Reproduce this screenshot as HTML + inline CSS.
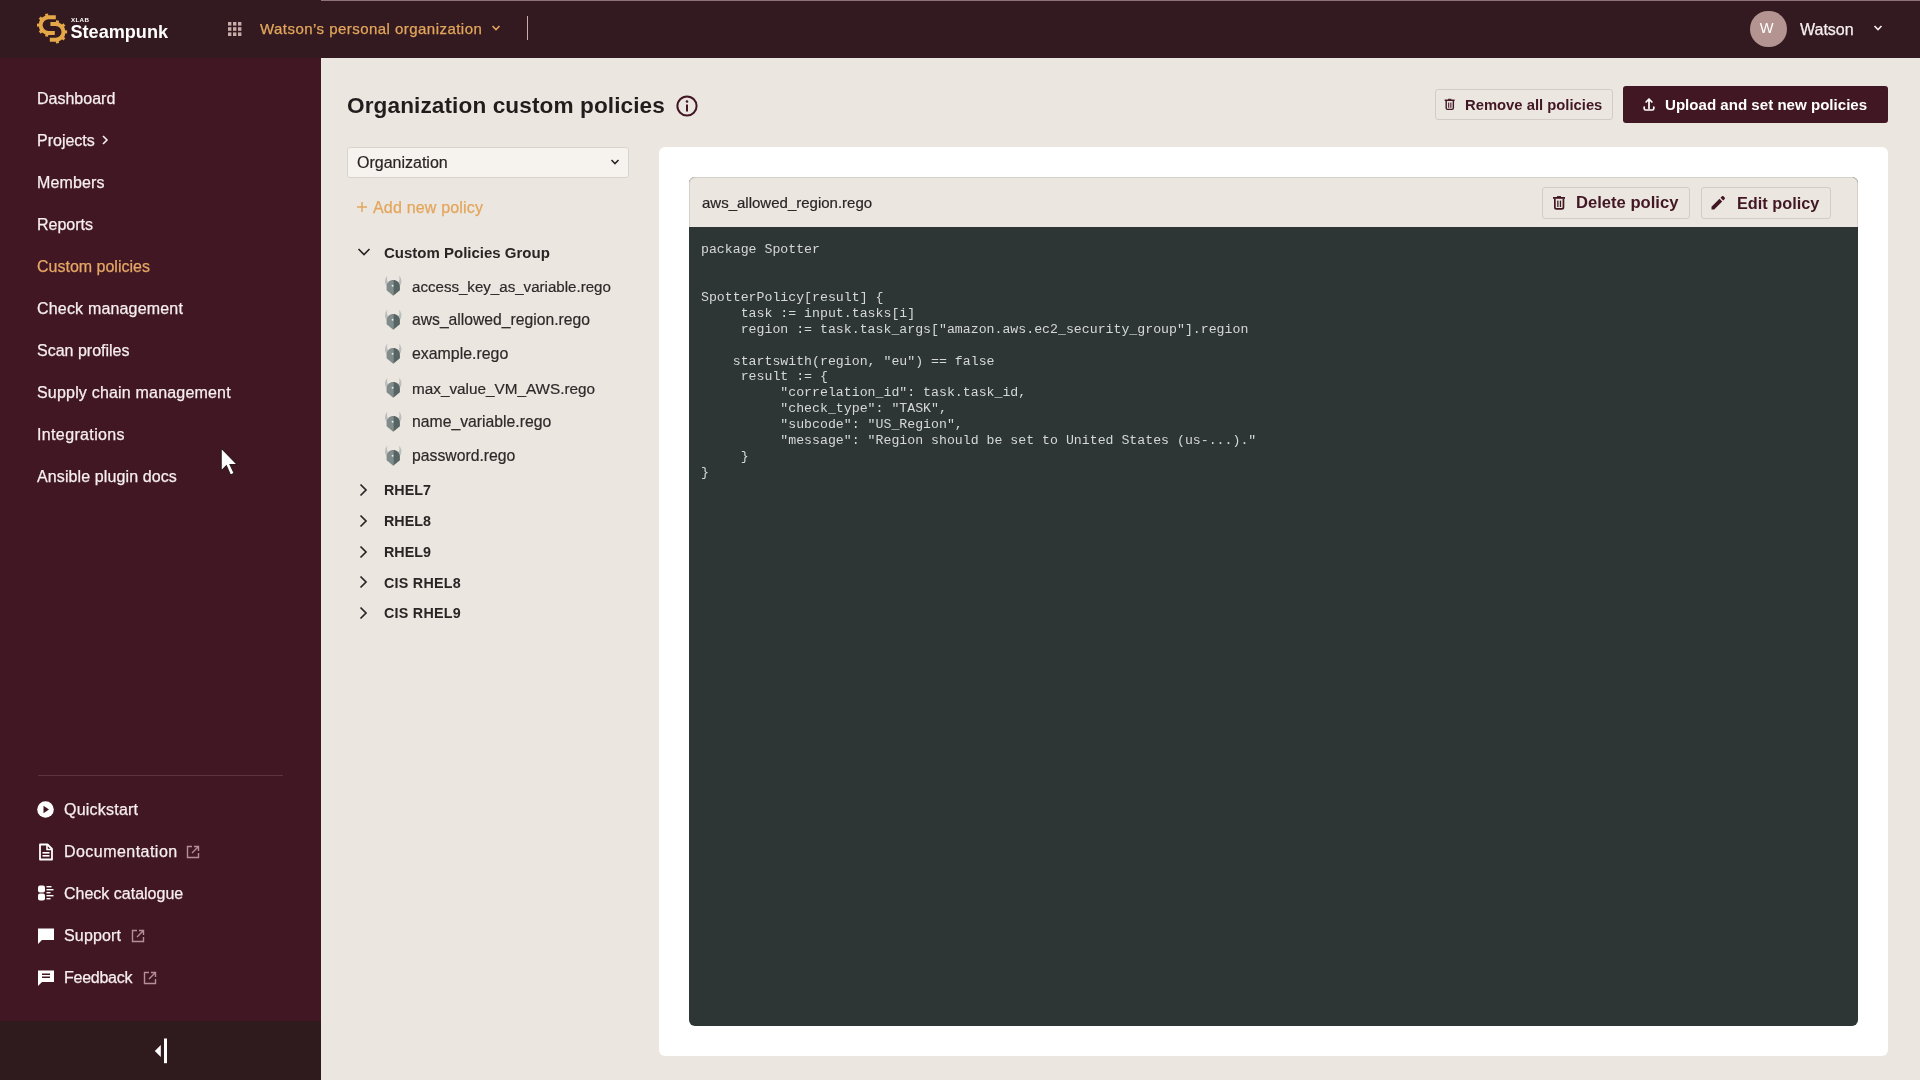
<!DOCTYPE html>
<html><head><meta charset="utf-8">
<style>
*{box-sizing:border-box;margin:0;padding:0}
html,body{width:1920px;height:1080px;overflow:hidden}
body{position:relative;background:#ebe6e0;font-family:"Liberation Sans",sans-serif;color:#2a2424}
.a{position:absolute;white-space:pre;line-height:1}
#hdr{position:absolute;left:0;top:0;width:1920px;height:58px;background:#331a20}
#hdrline{position:absolute;left:321px;top:0;width:1599px;height:1px;background:#90727b}
#side{position:absolute;left:0;top:58px;width:321px;height:1022px;background:#421724}
#sidebot{position:absolute;left:0;top:1021px;width:321px;height:59px;background:#2f1a1e}
.nav{position:absolute;left:37px;font-size:16px;color:#f6eef0;line-height:1;white-space:pre;-webkit-text-stroke:0.25px #f6eef0}
.nav.on{-webkit-text-stroke:0.25px #e5a865}
.nav.on{color:#e5a865}
#sep{position:absolute;left:38px;top:775px;width:245px;height:1px;background:#5b3440}
.card{position:absolute;left:659px;top:147px;width:1229px;height:909px;background:#fff;border-radius:6px}
.box{position:absolute;left:689px;top:177px;width:1169px;height:849px;border-radius:6px;background:#2e3535}
.boxhd{position:absolute;left:689px;top:177px;width:1169px;height:50px;background:#ebe6e0;border:1px solid #d6d0ca;border-bottom:none;border-radius:6px 6px 0 0}
.btn{position:absolute;border:1px solid #d2cbc6;border-radius:3px;background:#ebe6e0}
.code{position:absolute;left:701px;top:242.2px;font-family:"Liberation Mono",monospace;font-size:13.22px;line-height:15.9px;color:#d6d8d8;white-space:pre}
.tree{position:absolute;font-size:15.4px;color:#2d2929;line-height:1;white-space:pre;-webkit-text-stroke:0.2px #2d2929}
.grp{position:absolute;font-size:14.3px;font-weight:bold;color:#2a2424;line-height:1;white-space:pre}
</style></head><body><div style="position:absolute;left:0;top:0;width:1920px;height:1080px;will-change:transform">
<div id="hdr"></div>
<div id="hdrline"></div>
<div id="side"></div>
<div id="sidebot"></div>

<!-- logo -->
<svg class="a" style="left:34px;top:10px" width="36" height="36" viewBox="0 0 36 36">
 <g fill="none" stroke="#e4a848" stroke-width="4">
  <path d="M21.8 7.2 H14.5 A7.9 7.9 0 0 0 14.5 23 H20.8"/>
  <path d="M16.4 14 H21.6 A7.9 7.9 0 0 1 21.6 29.8 H15.8"/>
 </g>
 <g fill="#e4a848"><rect x="13.00" y="3.60" width="3" height="2.6" transform="rotate(-10 14.5 15.1)"/><rect x="13.00" y="3.60" width="3" height="2.6" transform="rotate(-50 14.5 15.1)"/><rect x="13.00" y="3.60" width="3" height="2.6" transform="rotate(-90 14.5 15.1)"/><rect x="13.00" y="3.60" width="3" height="2.6" transform="rotate(-130 14.5 15.1)"/><rect x="13.00" y="3.60" width="3" height="2.6" transform="rotate(-170 14.5 15.1)"/><rect x="20.10" y="10.40" width="3" height="2.6" transform="rotate(10 21.6 21.9)"/><rect x="20.10" y="10.40" width="3" height="2.6" transform="rotate(50 21.6 21.9)"/><rect x="20.10" y="10.40" width="3" height="2.6" transform="rotate(90 21.6 21.9)"/><rect x="20.10" y="10.40" width="3" height="2.6" transform="rotate(130 21.6 21.9)"/><rect x="20.10" y="10.40" width="3" height="2.6" transform="rotate(170 21.6 21.9)"/></g>
</svg>
<div class="a" style="left:71px;top:16.6px;font-size:6.2px;font-weight:bold;color:#fff;letter-spacing:0.35px">XLAB</div>
<div class="a" style="left:70.5px;top:23.2px;font-size:18.1px;font-weight:bold;color:#fff">Steampunk</div>

<!-- apps grid -->
<svg class="a" style="left:227px;top:21px" width="16" height="16" viewBox="0 0 16 16" fill="#c9aba9">
 <rect x="1" y="1" width="3.4" height="3.6"/><rect x="6" y="1" width="3.4" height="3.6"/><rect x="11" y="1" width="3.4" height="3.6"/>
 <rect x="1" y="6.2" width="3.4" height="3.6"/><rect x="6" y="6.2" width="3.4" height="3.6"/><rect x="11" y="6.2" width="3.4" height="3.6"/>
 <rect x="1" y="11.4" width="3.4" height="3.6"/><rect x="6" y="11.4" width="3.4" height="3.6"/><rect x="11" y="11.4" width="3.4" height="3.6"/>
</svg>
<div class="a" style="left:260px;top:21.2px;font-size:15px;letter-spacing:0.46px;color:#e3a65c;-webkit-text-stroke:0.25px #e3a65c">Watson’s personal organization</div>
<svg class="a" style="left:490px;top:23px" width="12" height="10" viewBox="0 0 12 10"><path d="M2.5 3 L6 6.5 L9.5 3" fill="none" stroke="#e3a65c" stroke-width="1.6"/></svg>
<div class="a" style="left:527px;top:16px;width:1px;height:24px;background:#c9aba9"></div>

<!-- user -->
<div class="a" style="left:1750px;top:10.5px;width:36.5px;height:36.5px;border-radius:50%;background:#b39490"></div>
<div class="a" style="left:1759.8px;top:21.3px;font-size:14.6px;color:#fff">W</div>
<div class="a" style="left:1800px;top:21.8px;font-size:16px;color:#f6eef0;-webkit-text-stroke:0.25px #f6eef0">Watson</div>
<svg class="a" style="left:1872px;top:22px" width="12" height="12" viewBox="0 0 12 12"><path d="M2.5 4 L6 7.5 L9.5 4" fill="none" stroke="#f6eef0" stroke-width="1.6"/></svg>

<!-- sidebar nav -->
<div class="nav" style="top:91.1px">Dashboard</div>
<div class="nav" style="top:133.1px">Projects</div>
<svg class="a" style="left:100px;top:134px" width="10" height="12" viewBox="0 0 10 12"><path d="M3 2 L7 6 L3 10" fill="none" stroke="#f6eef0" stroke-width="1.6"/></svg>
<div class="nav" style="top:175.1px;letter-spacing:0.15px">Members</div>
<div class="nav" style="top:217.1px">Reports</div>
<div class="nav on" style="top:259.1px">Custom policies</div>
<div class="nav" style="top:301.1px;letter-spacing:0.18px">Check management</div>
<div class="nav" style="top:343.1px">Scan profiles</div>
<div class="nav" style="top:385.1px;letter-spacing:0.19px">Supply chain management</div>
<div class="nav" style="top:427.1px;letter-spacing:0.36px">Integrations</div>
<div class="nav" style="top:469.1px;letter-spacing:0.11px">Ansible plugin docs</div>

<!-- cursor -->
<svg class="a" style="left:219px;top:446px" width="23" height="33" viewBox="0 0 22 32">
 <path d="M2 2 L2 24 L7 19 L11 28 L14.5 26.5 L10.5 18 L17.5 18 Z" fill="#fff" stroke="#2a1a1e" stroke-width="1"/>
</svg>

<div id="sep"></div>
<!-- bottom nav -->
<svg class="a" style="left:37px;top:801px" width="17" height="17" viewBox="0 0 17 17"><circle cx="8.5" cy="8.5" r="8.3" fill="#fff"/><path d="M6.5 4.8 L12 8.5 L6.5 12.2 Z" fill="#421724"/></svg>
<div class="nav" style="left:64px;top:802.3px;letter-spacing:0.22px">Quickstart</div>

<svg class="a" style="left:38px;top:843px" width="16" height="18" viewBox="0 0 16 18"><path d="M2 1.5 H9.5 L14 6 V16.5 H2 Z" fill="none" stroke="#fff" stroke-width="1.8" stroke-linejoin="round"/><path d="M9 1.5 V6.5 H14" fill="none" stroke="#fff" stroke-width="1.6"/><rect x="4.5" y="9" width="7" height="1.6" fill="#fff"/><rect x="4.5" y="12" width="7" height="1.6" fill="#fff"/></svg>
<div class="nav" style="left:64px;top:844.1px;letter-spacing:0.46px">Documentation</div>
<svg class="a" style="left:186px;top:845px" width="14" height="14" viewBox="0 0 14 14"><path d="M6 1.5 H1.5 V12.5 H12.5 V8" fill="none" stroke="#b58f98" stroke-width="1.4"/><path d="M8 1.5 H12.5 V6 M12.5 1.5 L6 8" fill="none" stroke="#b58f98" stroke-width="1.4"/></svg>

<svg class="a" style="left:37px;top:884px" width="18" height="18" viewBox="0 0 18 18"><rect x="1" y="1.5" width="7" height="7" rx="2" fill="#fff"/><rect x="1" y="9.5" width="7" height="7" rx="2" fill="#fff"/><rect x="9.5" y="2" width="5" height="1.4" fill="#fff"/><rect x="9.5" y="5" width="7" height="1.4" fill="#fff"/><rect x="9.5" y="8" width="4" height="1.4" fill="#fff"/><rect x="9.5" y="11" width="7" height="1.4" fill="#fff"/><rect x="9.5" y="14" width="4" height="1.4" fill="#fff"/></svg>
<div class="nav" style="left:64px;top:886.1px">Check catalogue</div>

<svg class="a" style="left:37px;top:927px" width="18" height="18" viewBox="0 0 18 18"><path d="M1 1.5 H17 V13 H5 L1 17 Z" fill="#fff"/></svg>
<div class="nav" style="left:64px;top:928.1px;letter-spacing:0.17px">Support</div>
<svg class="a" style="left:131px;top:929px" width="14" height="14" viewBox="0 0 14 14"><path d="M6 1.5 H1.5 V12.5 H12.5 V8" fill="none" stroke="#b58f98" stroke-width="1.4"/><path d="M8 1.5 H12.5 V6 M12.5 1.5 L6 8" fill="none" stroke="#b58f98" stroke-width="1.4"/></svg>

<svg class="a" style="left:37px;top:969px" width="18" height="18" viewBox="0 0 18 18"><path d="M1 1.5 H17 V13 H5 L1 17 Z" fill="#fff"/><rect x="5" y="4.5" width="8" height="1.5" fill="#421724"/><rect x="5" y="7.5" width="8" height="1.5" fill="#421724"/></svg>
<div class="nav" style="left:64px;top:970.1px;letter-spacing:-0.27px">Feedback</div>
<svg class="a" style="left:143px;top:971px" width="14" height="14" viewBox="0 0 14 14"><path d="M6 1.5 H1.5 V12.5 H12.5 V8" fill="none" stroke="#b58f98" stroke-width="1.4"/><path d="M8 1.5 H12.5 V6 M12.5 1.5 L6 8" fill="none" stroke="#b58f98" stroke-width="1.4"/></svg>

<!-- collapse -->
<svg class="a" style="left:152px;top:1036px" width="18" height="30" viewBox="0 0 18 30"><path d="M2.8 9 L8.8 3 V15 Z" transform="translate(0,6)" fill="#fff"/><rect x="12" y="2.5" width="3" height="24.7" fill="#fff"/></svg>


<div class="card"></div>
<div class="box"></div>
<div class="boxhd"></div>
<div class="a" style="left:702px;top:194.8px;font-size:15px;color:#2a2424;-webkit-text-stroke:0.2px #2a2424">aws_allowed_region.rego</div>
<div class="btn" style="left:1542px;top:187px;width:148px;height:32px"></div>
<svg class="a" style="left:1551px;top:194px" width="16" height="18" viewBox="0 0 16 18"><rect x="2" y="3" width="12" height="1.8" fill="#421724"/><rect x="6" y="2.1" width="4" height="1.3" fill="#421724"/><path d="M3.85 4.8 V13.2 Q3.85 14.85 5.5 14.85 H10.8 Q12.45 14.85 12.45 13.2 V4.8" fill="none" stroke="#421724" stroke-width="1.7"/><rect x="6.2" y="6.6" width="1.3" height="6.4" fill="#421724"/><rect x="8.8" y="6.6" width="1.3" height="6.4" fill="#421724"/></svg>
<div class="a" style="left:1576px;top:195.4px;font-size:16.6px;font-weight:bold;color:#421724">Delete policy</div>
<div class="btn" style="left:1701px;top:187px;width:130px;height:32px"></div>
<svg class="a" style="left:1710px;top:195px" width="16" height="16" viewBox="0 0 16 16"><path d="M1.5 11.8 V14.5 H4.2 L12.2 6.5 L9.5 3.8 Z" fill="#421724"/><path d="M10.5 2.8 L12 1.3 C12.4 0.9 13 0.9 13.4 1.3 L14.7 2.6 C15.1 3 15.1 3.6 14.7 4 L13.2 5.5 Z" fill="#421724"/></svg>
<div class="a" style="left:1737px;top:194.8px;font-size:16.3px;font-weight:bold;color:#421724">Edit policy</div>
<div class="code">package Spotter


SpotterPolicy[result] {
     task := input.tasks[i]
     region := task.task_args["amazon.aws.ec2_security_group"].region

    startswith(region, "eu") == false
     result := {
          "correlation_id": task.task_id,
          "check_type": "TASK",
          "subcode": "US_Region",
          "message": "Region should be set to United States (us-...)."
     }
}</div>

<!-- title -->
<div class="a" style="left:347px;top:95px;font-size:22.6px;font-weight:bold;letter-spacing:0.1px;color:#221d1d">Organization custom policies</div>
<svg class="a" style="left:676px;top:94.8px" width="22" height="22" viewBox="0 0 22 22"><circle cx="11" cy="11" r="9.6" fill="none" stroke="#421724" stroke-width="2"/><rect x="10" y="9.5" width="2" height="7" fill="#421724"/><circle cx="11" cy="6.5" r="1.3" fill="#421724"/></svg>

<!-- top buttons -->
<div class="btn" style="left:1435px;top:89px;width:178px;height:31px"></div>
<svg class="a" style="left:1443.3px;top:97px" width="13.3" height="15" viewBox="0 0 16 18"><rect x="2" y="3" width="12" height="1.8" fill="#421724"/><rect x="6" y="2.1" width="4" height="1.3" fill="#421724"/><path d="M3.85 4.8 V13.2 Q3.85 14.85 5.5 14.85 H10.8 Q12.45 14.85 12.45 13.2 V4.8" fill="none" stroke="#421724" stroke-width="1.7"/><rect x="6.2" y="6.6" width="1.3" height="6.4" fill="#421724"/><rect x="8.8" y="6.6" width="1.3" height="6.4" fill="#421724"/></svg>
<div class="a" style="left:1465px;top:97.5px;font-size:14.8px;font-weight:bold;color:#421724">Remove all policies</div>

<div class="a" style="left:1623px;top:86px;width:265px;height:36.5px;background:#421724;border-radius:3px"></div>
<svg class="a" style="left:1641px;top:96px" width="16" height="16" viewBox="0 0 16 16"><path d="M8 12.4 V3.2 M5.1 6 L8 3 L10.9 6" fill="none" stroke="#fff" stroke-width="1.7" stroke-linecap="round" stroke-linejoin="round"/><path d="M3.2 11 V12.5 Q3.2 14 4.7 14 H11.3 Q12.8 14 12.8 12.5 V11" fill="none" stroke="#fff" stroke-width="1.7" stroke-linecap="round"/></svg>
<div class="a" style="left:1665px;top:97.3px;font-size:15.1px;font-weight:bold;color:#fff">Upload and set new policies</div>

<!-- select -->
<div class="a" style="left:347px;top:147px;width:282px;height:31px;background:#f6f3ef;border:1px solid #d9d3ce;border-radius:3px"></div>
<div class="a" style="left:357px;top:155.3px;font-size:16px;color:#2a2424;-webkit-text-stroke:0.2px #2a2424">Organization</div>
<svg class="a" style="left:609px;top:157px" width="12" height="10" viewBox="0 0 12 10"><path d="M2.5 3 L6 6.5 L9.5 3" fill="none" stroke="#2a2424" stroke-width="1.6"/></svg>

<!-- add new -->
<svg class="a" style="left:356px;top:200.8px" width="12" height="12" viewBox="0 0 12 12"><path d="M6 1 V11 M1 6 H11" stroke="#e3a65c" stroke-width="1.5"/></svg>
<div class="a" style="left:373px;top:200.0px;font-size:16px;letter-spacing:0.18px;color:#e3a65c;-webkit-text-stroke:0.25px #e3a65c">Add new policy</div>

<!-- tree -->
<svg class="a" style="left:357px;top:246px" width="14" height="12" viewBox="0 0 14 12"><path d="M1.5 3 L7 8.5 L12.5 3" fill="none" stroke="#2a2424" stroke-width="1.7"/></svg>
<div class="grp" style="left:384px;top:245.2px;font-size:15px">Custom Policies Group</div>

<svg class="a" style="left:383px;top:275.2px" width="20" height="22" viewBox="0 0 20 22"><path d="M3.9 11.2 C1.4 9 1.2 4 4.4 0.8 C3.7 3.8 4 6.4 5.8 8 Z" fill="#bdbfbf"/><path d="M16.6 11.2 C19.1 9 19.3 4 16.1 0.8 C16.8 3.8 16.5 6.4 14.7 8 Z" fill="#bdbfbf"/><path d="M3.6 11.5 C3.8 7.6 6.6 5 10.25 5 V20.8 L3.6 15.3 Z" fill="#808c8c"/><path d="M10.25 5 C13.9 5 16.7 7.6 16.9 11.5 V15.3 L10.25 20.8 Z" fill="#566464"/><circle cx="9.6" cy="10.8" r="0.95" fill="#e6ecec"/></svg>
<div class="tree" style="left:412px;top:278.8px;font-size:15.1px">access_key_as_variable.rego</div>
<svg class="a" style="left:383px;top:309.2px" width="20" height="22" viewBox="0 0 20 22"><path d="M3.9 11.2 C1.4 9 1.2 4 4.4 0.8 C3.7 3.8 4 6.4 5.8 8 Z" fill="#bdbfbf"/><path d="M16.6 11.2 C19.1 9 19.3 4 16.1 0.8 C16.8 3.8 16.5 6.4 14.7 8 Z" fill="#bdbfbf"/><path d="M3.6 11.5 C3.8 7.6 6.6 5 10.25 5 V20.8 L3.6 15.3 Z" fill="#808c8c"/><path d="M10.25 5 C13.9 5 16.7 7.6 16.9 11.5 V15.3 L10.25 20.8 Z" fill="#566464"/><circle cx="9.6" cy="10.8" r="0.95" fill="#e6ecec"/></svg>
<div class="tree" style="left:412px;top:312.2px;font-size:15.7px">aws_allowed_region.rego</div>
<svg class="a" style="left:383px;top:343.2px" width="20" height="22" viewBox="0 0 20 22"><path d="M3.9 11.2 C1.4 9 1.2 4 4.4 0.8 C3.7 3.8 4 6.4 5.8 8 Z" fill="#bdbfbf"/><path d="M16.6 11.2 C19.1 9 19.3 4 16.1 0.8 C16.8 3.8 16.5 6.4 14.7 8 Z" fill="#bdbfbf"/><path d="M3.6 11.5 C3.8 7.6 6.6 5 10.25 5 V20.8 L3.6 15.3 Z" fill="#808c8c"/><path d="M10.25 5 C13.9 5 16.7 7.6 16.9 11.5 V15.3 L10.25 20.8 Z" fill="#566464"/><circle cx="9.6" cy="10.8" r="0.95" fill="#e6ecec"/></svg>
<div class="tree" style="left:412px;top:346.1px;font-size:15.9px">example.rego</div>
<svg class="a" style="left:383px;top:377.2px" width="20" height="22" viewBox="0 0 20 22"><path d="M3.9 11.2 C1.4 9 1.2 4 4.4 0.8 C3.7 3.8 4 6.4 5.8 8 Z" fill="#bdbfbf"/><path d="M16.6 11.2 C19.1 9 19.3 4 16.1 0.8 C16.8 3.8 16.5 6.4 14.7 8 Z" fill="#bdbfbf"/><path d="M3.6 11.5 C3.8 7.6 6.6 5 10.25 5 V20.8 L3.6 15.3 Z" fill="#808c8c"/><path d="M10.25 5 C13.9 5 16.7 7.6 16.9 11.5 V15.3 L10.25 20.8 Z" fill="#566464"/><circle cx="9.6" cy="10.8" r="0.95" fill="#e6ecec"/></svg>
<div class="tree" style="left:412px;top:380.6px;font-size:15.3px">max_value_VM_AWS.rego</div>
<svg class="a" style="left:383px;top:411.2px" width="20" height="22" viewBox="0 0 20 22"><path d="M3.9 11.2 C1.4 9 1.2 4 4.4 0.8 C3.7 3.8 4 6.4 5.8 8 Z" fill="#bdbfbf"/><path d="M16.6 11.2 C19.1 9 19.3 4 16.1 0.8 C16.8 3.8 16.5 6.4 14.7 8 Z" fill="#bdbfbf"/><path d="M3.6 11.5 C3.8 7.6 6.6 5 10.25 5 V20.8 L3.6 15.3 Z" fill="#808c8c"/><path d="M10.25 5 C13.9 5 16.7 7.6 16.9 11.5 V15.3 L10.25 20.8 Z" fill="#566464"/><circle cx="9.6" cy="10.8" r="0.95" fill="#e6ecec"/></svg>
<div class="tree" style="left:412px;top:414.2px;font-size:15.75px">name_variable.rego</div>
<svg class="a" style="left:383px;top:445.2px" width="20" height="22" viewBox="0 0 20 22"><path d="M3.9 11.2 C1.4 9 1.2 4 4.4 0.8 C3.7 3.8 4 6.4 5.8 8 Z" fill="#bdbfbf"/><path d="M16.6 11.2 C19.1 9 19.3 4 16.1 0.8 C16.8 3.8 16.5 6.4 14.7 8 Z" fill="#bdbfbf"/><path d="M3.6 11.5 C3.8 7.6 6.6 5 10.25 5 V20.8 L3.6 15.3 Z" fill="#808c8c"/><path d="M10.25 5 C13.9 5 16.7 7.6 16.9 11.5 V15.3 L10.25 20.8 Z" fill="#566464"/><circle cx="9.6" cy="10.8" r="0.95" fill="#e6ecec"/></svg>
<div class="tree" style="left:412px;top:448.2px;font-size:15.75px">password.rego</div>
<svg class="a" style="left:357px;top:483.0px" width="12" height="14" viewBox="0 0 12 14"><path d="M3.5 1.5 L9 7 L3.5 12.5" fill="none" stroke="#2a2424" stroke-width="1.7"/></svg>
<div class="grp" style="left:384px;top:483.2px;font-size:14.3px">RHEL7</div>
<svg class="a" style="left:357px;top:513.9px" width="12" height="14" viewBox="0 0 12 14"><path d="M3.5 1.5 L9 7 L3.5 12.5" fill="none" stroke="#2a2424" stroke-width="1.7"/></svg>
<div class="grp" style="left:384px;top:514.1px;font-size:14.3px">RHEL8</div>
<svg class="a" style="left:357px;top:544.6px" width="12" height="14" viewBox="0 0 12 14"><path d="M3.5 1.5 L9 7 L3.5 12.5" fill="none" stroke="#2a2424" stroke-width="1.7"/></svg>
<div class="grp" style="left:384px;top:544.8px;font-size:14.3px">RHEL9</div>
<svg class="a" style="left:357px;top:575.3px" width="12" height="14" viewBox="0 0 12 14"><path d="M3.5 1.5 L9 7 L3.5 12.5" fill="none" stroke="#2a2424" stroke-width="1.7"/></svg>
<div class="grp" style="left:384px;top:575.5px;font-size:14.3px;letter-spacing:0.25px">CIS RHEL8</div>
<svg class="a" style="left:357px;top:606.0px" width="12" height="14" viewBox="0 0 12 14"><path d="M3.5 1.5 L9 7 L3.5 12.5" fill="none" stroke="#2a2424" stroke-width="1.7"/></svg>
<div class="grp" style="left:384px;top:606.2px;font-size:14.3px;letter-spacing:0.25px">CIS RHEL9</div>

</div></body></html>
